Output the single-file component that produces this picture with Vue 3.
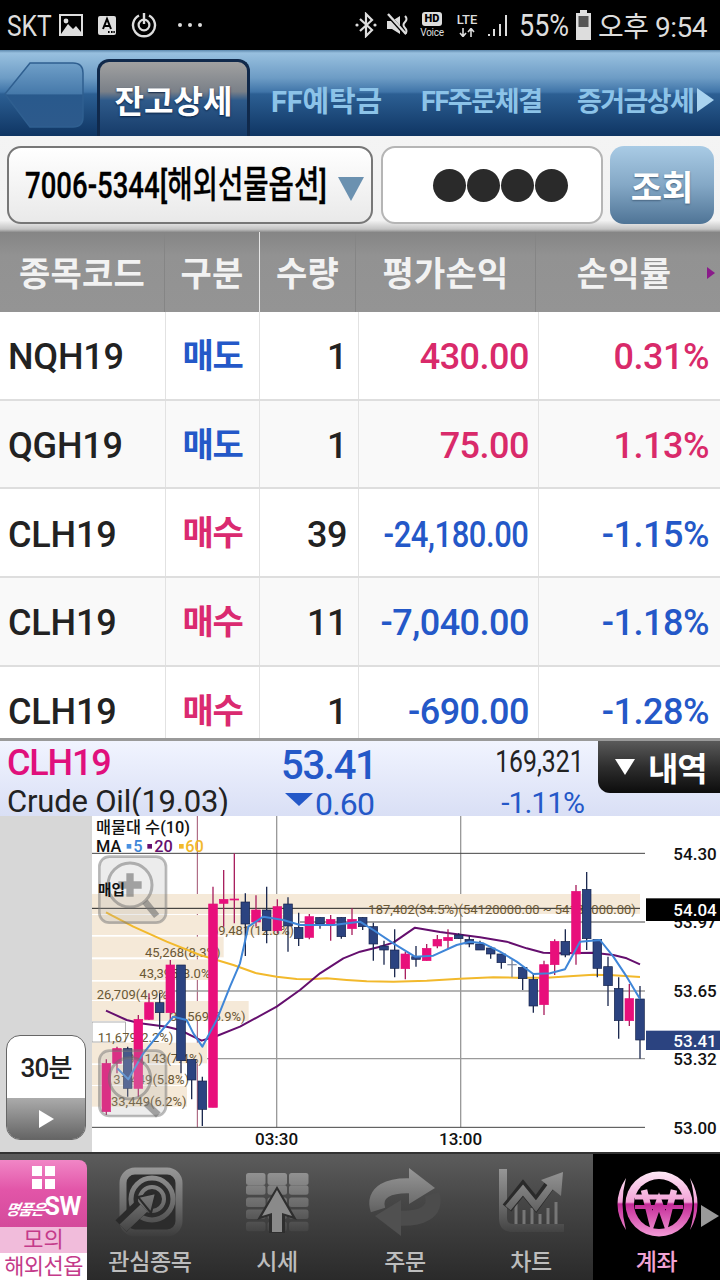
<script setup>
const tabs = [
  { t: 'FF예탁금', w: 150, c: 't1' },
  { t: 'FF주문체결', w: 156, c: 't2' },
  { t: '증거금상세', w: 120, c: 't3' }
]
const heads = [
  { t: '종목코드', c: 'h1' }, { t: '구분', c: 'h2' }, { t: '수량', c: 'h3' }, { t: '평가손익', c: 'h4' }, { t: '손익률', c: 'h5' }
]
const rows = [
  ['NQH19', '매도', '1', '430.00', '0.31%', 'sell', 'up', ''],
  ['QGH19', '매도', '1', '75.00', '1.13%', 'sell', 'up', ''],
  ['CLH19', '매수', '39', '-24,180.00', '-1.15%', 'buy', 'down', 'tight'],
  ['CLH19', '매수', '11', '-7,040.00', '-1.18%', 'buy', 'down', ''],
  ['CLH19', '매수', '1', '-690.00', '-1.28%', 'buy', 'down', '']
]
const P = '#e80f7b', N = '#2b4380'
const left = [
  [319,730,875,718,885,P],[351,686,730,680,760,P],[383,686,805,680,830,N],[415,598,805,585,830,P],
  [447,548,598,520,600,P],[479,548,578,520,628,N],[511,435,578,420,600,P],[543,435,722,435,760,N],
  [575,718,780,718,838,N],[607,783,868,770,918,N],[639,252,862,200,862,P],[671,238,250,150,320,P],
  [703,237,240,100,310,P],[736,246,312,220,408,N],[768,270,306,226,320,P],[800,270,332,200,370,N],
  [832,260,332,238,340,P],[864,252,318,232,395,N],[896,322,356,278,378,N],[928,290,352,282,358,P],
  [960,292,312,292,326,N],[992,298,315,285,362,P],[1024,292,350,292,356,N],[1056,298,326,265,345,P]
]
const right = [
  [8,292,320,292,330,N],[40,320,372,308,422,N],[72,378,390,362,434,N],[104,390,445,328,472,N],
  [136,402,446,395,478,P],[168,410,418,378,440,N],[200,385,422,372,422,P],[232,358,378,345,385,P],
  [264,352,362,328,388,P],[296,345,356,340,356,N],[328,358,372,348,382,N],[360,372,390,362,390,N],
  [392,384,402,378,416,N],[424,402,428,402,446,N],[488,442,476,442,510,N],[520,478,558,462,578,N],
  [552,434,554,422,585,P],[584,364,434,358,465,P],[616,364,405,328,412,N],[648,214,402,195,434,P],
  [680,208,356,156,390,N],[712,358,445,358,472,N],[744,440,497,410,558,N],[776,505,602,472,656,N],
  [808,536,602,492,618,P],[840,537,660,498,716,N]
].map(c => [c[0] + 1080, ...c.slice(1)])
const candles = [...left, ...right].map(c => ({ x: c[0], top: c[1], bot: c[2], wt: c[3], wb: c[4], col: c[5], wick: c[5] === P ? '#a8205f' : '#1d2a50' }))

const pts = (l, r) => [...l, ...r.map(p => [p[0] + 1080, p[1]])].map(p => p.join(',')).join(' ')
const ma60 = pts(
  [[318,277],[400,320],[500,365],[600,405],[700,435],[770,460],[830,470],[890,477],[930,478],[980,475],[1040,480]],
  [[20,484],[100,485],[200,482],[300,476],[400,472],[470,473],[560,473],[640,468],[700,464],[760,466],[840,471]]
)
const ma20 = pts(
  [[318,572],[380,600],[420,610],[500,620],[540,630],[580,650],[605,662],[650,648],[720,620],[830,560],[900,510],[960,460],[1030,415]],
  [[0,395],[60,380],[100,368],[165,323],[240,336],[360,352],[440,365],[500,385],[550,398],[600,400],[700,398],[760,405],[800,415],[840,433]]
)
const ma5 = pts(
  [[352,745],[385,778],[430,700],[470,650],[520,590],[560,600],[580,640],[607,680],[650,600],[690,500],[720,430],[745,320],[790,290],[850,300],[900,315],[1000,315]],
  [[0,305],[40,330],[100,370],[165,410],[220,407],[290,375],[330,365],[370,370],[420,395],[470,425],[520,462],[570,460],[615,448],[660,365],[720,360],[760,410],[800,470],[840,537]]
)
const bars = [
  [222,60,1920-276],[285,60,600],[350,62,395],[418,62,352],[485,55,225],[543,60,470],[668,62,345],[735,60,270],[798,62,285]
]
const vols = [
  ['187,402(34.5%)(54120000.00 ~ 54130000.00)', 1105, 282],
  ['69,481(12.8%)', 633, 345],
  ['45,268(8.3%)', 435, 410],
  ['43,395(8.0%)', 418, 475],
  ['26,709(4.9%)', 290, 537],
  ['34,569(6.9%)', 510, 602],
  ['11,679(2.2%)', 293, 665],
  ['39,143(7.4%)', 382, 730],
  ['31,449(5.8%)', 340, 792],
  ['33,449(6.2%)', 333, 857]
]
const axis = [
  ['54.30', 120], ['53.97', 325], ['53.65', 530], ['53.32', 735], ['53.00', 942]
]
const gridDark = [[276, 100], [900, 306]]
const navBlocks = []
for (let r = 0; r < 5; r++) for (let c = 0; c < 3; c++) navBlocks.push({ x: 9 + c * 21.5, y: 7 + r * 12.2, w: 19.5, h: r === 0 ? 12 : 9.5 })
</script>

<template>
  <div class="page">
    <!-- status bar -->
    <div class="status">
      <span class="skt">SKT</span>
      <svg class="s-pic" width="24" height="22" viewBox="0 0 24 22"><rect x="1" y="1" width="22" height="20" fill="none" stroke="#ddd" stroke-width="2"/><path d="M2 20 L9 10 L14 15 L17 12 L22 18 V20 Z" fill="#ddd"/><circle cx="7" cy="7" r="2.4" fill="#ddd"/></svg>
      <svg class="s-a" width="18" height="19" viewBox="0 0 18 19"><rect width="18" height="19" rx="2" fill="#ddd"/><path d="M5 13 L9 3 L13 13 M6.5 10 H11.5" fill="none" stroke="#000" stroke-width="2"/><path d="M10 16 h1.6 M13 16 h1.6 M15.4 16 h1.4" stroke="#000" stroke-width="2"/></svg>
      <svg class="s-pow" width="26" height="26" viewBox="0 0 26 26"><path d="M8 3.5 A11 11 0 1 0 18 3.5" fill="none" stroke="#ddd" stroke-width="2.4"/><circle cx="13" cy="13" r="5.4" fill="none" stroke="#ddd" stroke-width="2.2"/><path d="M13 1 V12" stroke="#ddd" stroke-width="2.4"/></svg>
      <span class="dots"><i></i><i></i><i></i></span>
      <svg class="s-bt" width="22" height="26" viewBox="0 0 22 26"><path d="M5 7 L17 18 L11 24 V2 L17 8 L5 19" fill="none" stroke="#ddd" stroke-width="2.2"/><circle cx="2" cy="13" r="1.6" fill="#ddd"/><circle cx="20" cy="13" r="1.6" fill="#ddd"/></svg>
      <svg class="s-mute" width="25" height="24" viewBox="0 0 25 24"><path d="M1 8 H6 L14 3 V21 L6 16 H1 Z" fill="#ddd"/><path d="M2 2 L20 22" stroke="#000" stroke-width="3.6"/><path d="M2 1 L20 21" stroke="#ddd" stroke-width="2.4"/><path d="M19 3 q3 3 0 6 q-3 3 0 6 q3 3 0 6" fill="none" stroke="#ddd" stroke-width="2"/></svg>
      <span class="hd"><b>HD</b><em>Voice</em></span>
      <span class="lte"><b>LTE</b><svg width="22" height="9" viewBox="0 0 22 9"><path d="M7 0 V8 M4 5 L7 8.5 L10 5 M15 9 V1 M12 4 L15 .5 L18 4" fill="none" stroke="#ddd" stroke-width="1.6"/></svg></span>
      <svg class="s-sig" width="24" height="24" viewBox="0 0 24 24"><path d="M1 23 h2 v-2 h-2z M6 23 h2 v-7 h-2z M12 23 h2 V11 h-2z M18 23 h2 V2 h-2z" fill="#ddd"/></svg>
      <span class="pct">55%</span>
      <svg class="s-bat" width="17" height="30" viewBox="0 0 17 30"><path d="M5 0 H12 V3 H16 V30 H1 V3 H5 Z" fill="#ddd"/><rect x="3.5" y="6" width="10" height="11" fill="#555"/></svg>
      <span class="clock">오후 9:54</span>
    </div>

    <!-- tab bar -->
    <div class="tabbar">
      <svg class="back" width="84" height="68" viewBox="0 0 84 68"><path d="M2 33 L27 2 H70 Q80 2 80 12 V56 Q80 66 70 66 H27 Z" fill="url(#backG)" stroke="#2f5f90" stroke-width="1.5"/><defs><linearGradient id="backG" x1="0" y1="0" x2="0" y2="1"><stop offset="0" stop-color="#6f9fc8"/><stop offset=".48" stop-color="#4679aa"/><stop offset=".5" stop-color="#29598c"/><stop offset="1" stop-color="#2d5a8c"/></linearGradient></defs></svg>
      <div class="tab-active"><span>잔고상세</span></div>
      <div v-for="t in tabs" :key="t.t" class="tab" :class="t.c" :style="{ width: t.w + 'px' }"><span>{{ t.t }}</span></div>
      <i class="tab-arrow"></i>
    </div>

    <!-- search -->
    <div class="search">
      <div class="select"><span class="acct">7006-5344[해외선물옵션]</span><i class="sel-tri"></i></div>
      <div class="pw"><i></i><i></i><i></i><i></i></div>
      <div class="go">조회</div>
    </div>

    <!-- head -->
    <div class="thead">
      <div v-for="h in heads" :key="h.t" class="th" :class="h.c">{{ h.t }}</div>
      <i class="more"></i>
    </div>

    <!-- rows -->
    <div class="tbody">
      <div v-for="(r, i) in rows" :key="i" class="tr" :class="{ alt: i % 2 === 1 }">
        <div class="td code">{{ r[0] }}</div>
        <div class="td kind" :class="r[5]">{{ r[1] }}</div>
        <div class="td num qty">{{ r[2] }}</div>
        <div class="td num" :class="r[6]"><span :class="r[7]">{{ r[3] }}</span></div>
        <div class="td num rate" :class="r[6]">{{ r[4] }}</div>
      </div>
    </div>

    <!-- quote -->
    <div class="quote">
      <div class="q-a"><div class="q-code">CLH19</div><div class="q-name">Crude Oil(19.03)</div></div>
      <div class="q-b"><div class="q-price">53.41</div><div class="q-chg"><i></i><span>0.60</span></div></div>
      <div class="q-c"><div class="q-vol">169,321</div><div class="q-rate">-1.11%</div></div>
      <div class="q-btn"><i></i><span>내역</span></div>
    </div>

    <!-- chart -->
    <div class="chartwrap">
      <div class="rail">
        <div class="period"><div class="p-top">30분</div><div class="p-bot"><i></i></div></div>
      </div>
      <svg class="chart" width="628" height="336" viewBox="276 -12 1884 1008">
        <line x1="592" y1="-12" x2="592" y2="922" stroke="#a0506e" stroke-width="3"/>
        <line v-for="x in [830, 1382]" :key="x" :x1="x" y1="-12" :x2="x" y2="922" stroke="#9a9a9a" stroke-width="4"/>
        <line x1="276" y1="513" x2="1935" y2="513" stroke="#9a9a9a" stroke-width="4"/>
        <line x1="276" y1="716" x2="1935" y2="716" stroke="#9a9a9a" stroke-width="4"/>
        <line x1="276" y1="922" x2="1935" y2="922" stroke="#444" stroke-width="3"/>
        <line v-for="g in gridDark" :key="g[1]" :x1="g[0]" :y1="g[1]" x2="1935" :y2="g[1]" stroke="#444" stroke-width="3"/>
        <rect v-for="b in bars" :key="b[0]" x="276" :y="b[0]" :width="b[2]" :height="b[1]" fill="#f5e9d8"/>
        <rect x="276" y="606" width="100" height="60" fill="#fff" stroke="#888" stroke-width="2"/>
        <line x1="276" y1="265" x2="1920" y2="265" stroke="#222" stroke-width="3"/>
        <text v-for="v in vols" :key="v[0]" class="vol" :x="v[1]" :y="v[2]">{{ v[0] }}</text>

        <polyline :points="ma60" class="ma" stroke="#f2b92c" />
        <polyline :points="ma20" class="ma" stroke="#650f6e" />
        <g v-for="(c, i) in candles" :key="i">
          <line :x1="c.x" :y1="c.wt" :x2="c.x" :y2="c.wb" :stroke="c.wick" stroke-width="4"/>
          <rect :x="c.x - 13" :y="c.top" width="26" :height="c.bot - c.top" :fill="c.col" :stroke="c.col === '#2b4380' ? '#16234a' : c.col" stroke-width="2"/>
        </g>
        <line x1="1522" y1="434" x2="1550" y2="434" stroke="#8a93a8" stroke-width="4"/>
        <line x1="1536" y1="420" x2="1536" y2="472" stroke="#7a8398" stroke-width="4"/>
        <polyline :points="ma5" class="ma" stroke="#3f86d8" />

        <!-- zoom buttons -->
        <g class="zoomb">
          <rect x="298" y="110" width="200" height="198" rx="30"/>
          <circle cx="390" cy="195" r="66" class="lens"/>
          <path d="M390 160 V230 M355 195 H425" class="plus"/>
          <path d="M435 245 L470 288" class="hand"/>
          <rect x="298" y="692" width="200" height="196" rx="30"/>
          <circle cx="390" cy="775" r="62" class="lens"/>
          <path d="M438 850 L475 885" class="hand"/>
        </g>

        <text class="legend" x="288" y="38">매물대 수(10)</text>
        <text class="legend" x="288" y="95">MA</text>
        <rect x="380" y="72" width="14" height="14" fill="#4a90e0"/>
        <text class="legend c5" x="400" y="95">5</text>
        <rect x="442" y="72" width="14" height="14" fill="#650f6e"/>
        <text class="legend c20" x="463" y="95">20</text>
        <rect x="537" y="72" width="14" height="14" fill="#f2b92c"/>
        <text class="legend c60" x="556" y="95">60</text>
        <text class="buy-lbl" x="294" y="226">매입</text>

        <text v-for="a in axis" :key="a[0]" class="ax" x="2020" :y="a[1]">{{ a[0] }}</text>
        <rect x="1938" y="235" width="222" height="68" fill="#000"/>
        <text class="ax axw" x="2020" y="288">54.04</text>
        <rect x="1938" y="632" width="222" height="58" fill="#2b4380"/>
        <text class="ax axw" x="2020" y="682">53.41</text>
        <text class="ax" x="765" y="975">03:30</text>
        <text class="ax" x="1317" y="975">13:00</text>
      </svg>
    </div>

    <!-- nav -->
    <div class="nav">
      <div class="brand">
        <div class="b-top">
          <div class="grid4"><i></i><i></i><i></i><i></i></div>
          <div class="b-name"><em>명품은</em><b>SW</b></div>
        </div>
        <div class="b-mid">모의</div>
        <div class="b-low">해외선옵</div>
      </div>
      <div class="nitem">
        <svg width="80" height="72" viewBox="0 0 80 72">
          <defs>
            <linearGradient id="nd" gradientUnits="userSpaceOnUse" x1="0" y1="0" x2="0" y2="72"><stop offset="0" stop-color="#9a9a9a"/><stop offset=".55" stop-color="#6a6a6a"/><stop offset="1" stop-color="#3a3a3a"/></linearGradient>
            <linearGradient id="pk" gradientUnits="userSpaceOnUse" x1="0" y1="6" x2="0" y2="70"><stop offset="0" stop-color="#fde8f5"/><stop offset=".47" stop-color="#f3a2d8"/><stop offset=".5" stop-color="#c42a98"/><stop offset="1" stop-color="#f399d6"/></linearGradient>
          </defs>
          <rect x="13" y="5" width="56" height="62" rx="12" fill="#2c2c2c" stroke="url(#nd)" stroke-width="7"/>
          <circle cx="42" cy="33" r="21" fill="none" stroke="url(#nd)" stroke-width="5"/>
          <circle cx="42" cy="33" r="12" fill="none" stroke="url(#nd)" stroke-width="4"/>
          <path d="M11 60 L32 40" stroke="#2a2a2a" stroke-width="16"/>
          <path d="M13 62 L34 42" stroke="url(#nd)" stroke-width="10"/>
          <path d="M28 31 L46 27 L41 47 Z" fill="url(#nd)" stroke="#2a2a2a" stroke-width="2"/>
        </svg>
        <span>관심종목</span>
      </div>
      <div class="nitem">
        <svg width="80" height="72" viewBox="0 0 80 72">
          <rect v-for="(b, i) in navBlocks" :key="i" :x="b.x" :y="b.y" :width="b.w" :height="b.h" rx="2.5" fill="url(#nd)"/>
          <path d="M40 20 L60 54 L48 50 V67 H32 V50 L20 54 Z" fill="#2e2e2e"/>
          <path d="M40 24 L55 50 L45 47 V66 H35 V47 L25 50 Z" fill="#8a8a8a"/>
        </svg>
        <span>시세</span>
      </div>
      <div class="nitem">
        <svg width="80" height="72" viewBox="0 0 80 72">
          <g>
            <path d="M13 44 C7 26 24 18 50 20" fill="none" stroke="url(#nd)" stroke-width="15"/>
            <path d="M44 2 L70 22 L44 38 Z" fill="url(#nd)"/>
          </g>
          <g transform="rotate(180 40 36)">
            <path d="M13 44 C7 26 24 18 50 20" fill="none" stroke="#4c4c4c" stroke-width="15"/>
            <path d="M44 2 L70 22 L44 38 Z" fill="#505050"/>
          </g>
        </svg>
        <span>주문</span>
      </div>
      <div class="nitem">
        <svg width="80" height="72" viewBox="0 0 80 72">
          <path d="M12 3 V52 Q12 62 22 62 H73" fill="none" stroke="url(#nd)" stroke-width="8"/>
          <path d="M25 38 V58 M33 44 V58 M41 42 V58 M49 48 V58 M57 42 V58 M65 36 V58" stroke="#777" stroke-width="3"/>
          <path d="M16 42 L32 22 L45 38 L58 20" fill="none" stroke="#2a2a2a" stroke-width="11"/>
          <path d="M17 42 L32 24 L45 40 L60 20" fill="none" stroke="url(#nd)" stroke-width="7"/>
          <path d="M50 14 L72 6 L70 30 Z" fill="url(#nd)"/>
        </svg>
        <span>차트</span>
      </div>
      <div class="nitem active">
        <svg class="won" width="80" height="72" viewBox="0 0 80 72">
          <path d="M9 12 Q-8 38 9 64 Q2 38 9 12 Z" fill="url(#pk)"/>
          <path d="M73 12 Q88 38 73 64 Q81 38 73 12 Z" fill="url(#pk)"/>
          <ellipse cx="42" cy="38" rx="33.5" ry="32.5" fill="url(#pk)"/>
          <circle cx="42" cy="38" r="25" fill="#000"/>
          <path d="M27 24 L35 56 L42 36 L49 56 L57 24" fill="none" stroke="url(#pk)" stroke-width="6.5"/>
          <path d="M18 31 H66" stroke="url(#pk)" stroke-width="5"/>
          <path d="M18 41 H66" stroke="url(#pk)" stroke-width="4"/>
        </svg>
        <span>계좌</span>
        <i class="n-arrow"></i>
      </div>
    </div>
  </div>
</template>

<style>
html, body { margin: 0; padding: 0; background: #fff; }
</style>

<style scoped>
.page { width: 720px; height: 1280px; overflow: hidden; display: flex; flex-direction: column; font-family: Roboto, "Noto Sans CJK KR", sans-serif; background: #fff; }
i { display: block; font-style: normal; }

/* status */
.status { height: 50px; flex: none; background: #000; color: #ddd; display: flex; align-items: center; position: relative; }
.skt { font-size: 30px; margin-left: 7px; width: 42px; transform: scaleX(.82); transform-origin: left center; white-space: nowrap; }
.s-pic { margin-left: 10px; }
.s-a { margin-left: 15px; }
.s-pow { margin-left: 15px; }
.dots { display: flex; gap: 6px; margin-left: 21px; margin-right: 153px; }
.dots i { width: 4px; height: 4px; border-radius: 50%; background: #ddd; }
.s-mute { margin-left: 9px; }
.hd { margin-left: 7px; width: 28px; display: flex; flex-direction: column; align-items: center; line-height: 1; }
.hd b { font-size: 11px; background: #ddd; color: #000; border-radius: 3px; padding: 1px 3px; font-weight: 900; line-height: 12px; }
.hd em { font-style: normal; font-size: 10px; margin-top: 2px; letter-spacing: -.3px; }
.lte { margin-left: 8px; width: 26px; display: flex; flex-direction: column; align-items: center; line-height: 1; }
.lte b { font-size: 13px; line-height: 14px; font-weight: 500; margin-bottom: 1px; }
.s-sig { margin-left: 7px; }
.pct { margin-left: 8px; font-size: 31px; width: 48px; white-space: nowrap; transform: scaleX(.87); transform-origin: left center; }
.s-bat { margin-left: 8px; }
.clock { margin-left: 6px; font-size: 28px; white-space: nowrap; letter-spacing: -.5px; }

/* tabs */
.tabbar { height: 86px; flex: none; display: flex; align-items: flex-end; position: relative; background: linear-gradient(#5d88ad 0, #98c0df 3px, #6d9cc5 28px, #3f74a8 42px, #2c5f93 44px, #0f3563 100%); }
.back { position: absolute; left: 3px; top: 11px; }
.tab-active { margin-left: 97px; width: 153px; height: 77px; box-sizing: border-box; border: 3px solid #10294b; border-bottom: 0; border-radius: 12px 12px 0 0; background: linear-gradient(#a1a1a1 0, #7a8088 40%, #2e5a8a 52%, #163b69 100%); display: flex; justify-content: center; align-items: center; padding-top: 6px; }
.tab-active span { color: #fff; font-size: 32px; font-weight: 700; white-space: nowrap; line-height: 1; text-shadow: 0 1px 2px #0a2345; }
.tab { height: 84px; display: flex; align-items: center; flex: none; padding-top: 16px; box-sizing: border-box; }
.tab span { color: #8cc3e8; font-weight: 700; white-space: nowrap; line-height: 1; }
.t1 span { font-size: 29px; letter-spacing: -.2px; margin-left: 21px; }
.t2 span { font-size: 27px; letter-spacing: -1.4px; margin-left: 21px; }
.t3 span { font-size: 27px; letter-spacing: -1.6px; margin-left: 21px; }
.tab-arrow { position: absolute; left: 697px; top: 38px; width: 0; height: 0; border-left: 17px solid #a9d3ef; border-top: 12px solid transparent; border-bottom: 12px solid transparent; }

/* search */
.search { height: 96px; flex: none; box-sizing: border-box; display: flex; align-items: flex-start; padding: 10px 6px 0 7px; background: linear-gradient(#f4f4f4 0, #f2f2f2 88%, #c4c4c4 97%, #8e8e8e 100%); }
.select { width: 366px; height: 78px; box-sizing: border-box; border: 2px solid #777; border-radius: 14px; background: linear-gradient(#fff, #e9e9e9); display: flex; align-items: center; padding-left: 16px; position: relative; }
.acct { font-size: 37px; font-weight: 500; color: #000; white-space: nowrap; transform: scaleX(.745); transform-origin: left center; line-height: 1; -webkit-text-stroke: .3px #000; }
.sel-tri { position: absolute; left: 329px; top: 29px; width: 0; height: 0; border-top: 24px solid #6b91b0; border-left: 13px solid transparent; border-right: 13px solid transparent; }
.pw { width: 222px; height: 78px; margin-left: 8px; box-sizing: border-box; border: 2px solid #b5b5b5; border-radius: 14px; background: #fff; display: flex; align-items: center; justify-content: center; gap: 1px; padding-left: 16px; }
.pw i { width: 33px; height: 33px; border-radius: 50%; background: #2a2a2a; }
.go { width: 104px; height: 78px; margin-left: 7px; border-radius: 14px; background: linear-gradient(#a9cbe5, #84a8c6 50%, #4f7496); color: #fff; font-size: 34px; font-weight: 700; display: flex; align-items: center; justify-content: center; text-shadow: 0 1px 2px #44617c; white-space: nowrap; }

/* table */
.thead { height: 80px; flex: none; display: grid; grid-template-columns: 164px 95px 96px 180px 185px; background: linear-gradient(#858585 0, #929292 30%, #949494 100%); position: relative; }
.th { color: #f2f2f2; font-size: 34px; font-weight: 700; display: flex; align-items: center; justify-content: center; border-left: 1px solid #858585; padding-bottom: 2px; white-space: nowrap; letter-spacing: .2px; }
.th.h1 { border-left: 0; }
.th.h3 { border-left: 1px solid #e6e6e6; }
.th.h5 { padding-right: 8px; }
.more { position: absolute; left: 707px; top: 35px; width: 0; height: 0; border-left: 8px solid #8a1a8a; border-top: 6px solid transparent; border-bottom: 6px solid transparent; }
.tbody { height: 426px; flex: none; overflow: hidden; }
.tr { display: grid; grid-template-columns: 165px 94px 99px 180px 182px; height: 88.7px; box-sizing: border-box; border-bottom: 2px solid #dedede; background: #fff; }
.tr.alt { background: #f9f9f9; }
.td { display: flex; align-items: center; border-left: 1px solid #e2e2e2; font-size: 36px; font-weight: 500; color: #222; white-space: nowrap; line-height: 1; padding-top: 4px; box-sizing: border-box; }
.code { border-left: 0; padding-left: 8px; letter-spacing: -.2px; }
.kind { justify-content: center; font-size: 34px; font-weight: 700; padding-top: 1px; letter-spacing: -1.4px; }
.sell { color: #2458c8; }
.buy { color: #da2a70; }
.num { justify-content: flex-end; padding-right: 9px; letter-spacing: -.5px; }
.tight { display: inline-block; transform: scaleX(.86); transform-origin: right center; }
.qty { padding-right: 11px; }
.rate { padding-right: 11px; }
.up { color: #d92a6a; }
.down { color: #2458c8; }

/* quote */
.quote { height: 78px; flex: none; box-sizing: border-box; border-top: 3px solid #9a9a9a; background: linear-gradient(#f1f4ff, #d9dff5); display: flex; overflow: hidden; position: relative; }
.q-a { width: 274px; padding-left: 7px; box-sizing: border-box; flex: none; }
.q-code { color: #e0107c; font-size: 36px; font-weight: 500; line-height: 44px; letter-spacing: -1.2px; }
.q-name { color: #222; font-size: 31px; line-height: 36px; letter-spacing: -.2px; white-space: nowrap; margin-top: -1px; }
.q-b { width: 220px; flex: none; }
.q-price { color: #2458c8; font-size: 40px; font-weight: 500; line-height: 50px; letter-spacing: -1.3px; padding-left: 7px; }
.q-chg { display: flex; align-items: flex-start; margin-top: -6px; margin-left: 11px; }
.q-chg i { width: 0; height: 0; border-top: 13px solid #2458c8; border-left: 14px solid transparent; border-right: 14px solid transparent; margin-top: 8px; }
.q-chg span { color: #2458c8; font-size: 32px; line-height: 38px; margin-left: 2px; letter-spacing: -.8px; }
.q-c { flex: none; width: 90px; display: flex; flex-direction: column; align-items: flex-end; }
.q-vol { font-size: 31px; line-height: 42px; color: #222; white-space: nowrap; transform: scaleX(.8); transform-origin: right center; }
.q-rate { font-size: 30px; line-height: 36px; color: #2458c8; letter-spacing: -1px; margin-top: 2px; white-space: nowrap; }
.q-btn { position: absolute; right: 0; top: 0; width: 122px; height: 52px; border-radius: 0 0 0 12px; background: linear-gradient(#5a5a5a, #2e2e2e 50%, #0c0c0c); display: flex; align-items: center; color: #fff; font-size: 33px; font-weight: 700; }
.q-btn i { width: 0; height: 0; border-top: 16px solid #fff; border-left: 10px solid transparent; border-right: 10px solid transparent; margin-left: 17px; margin-right: 13px; }
.q-btn span { white-space: nowrap; letter-spacing: -1px; }

/* chart */
.chartwrap { height: 336px; flex: none; display: flex; }
.rail { width: 92px; flex: none; background: #d7d7d7; display: flex; align-items: flex-end; box-sizing: border-box; padding: 0 6px 12px; }
.period { width: 80px; height: 105px; box-sizing: border-box; border: 1px solid #666; border-radius: 14px; overflow: hidden; display: flex; flex-direction: column; background: #fff; }
.p-top { height: 62px; display: flex; align-items: center; justify-content: center; font-size: 26px; font-weight: 500; color: #222; padding-bottom: 4px; box-sizing: border-box; letter-spacing: -.8px; white-space: nowrap; }
.p-bot { flex: 1; background: linear-gradient(#ababab, #656565); display: flex; align-items: center; justify-content: center; }
.p-bot i { width: 0; height: 0; border-left: 15px solid #fff; border-top: 9px solid transparent; border-bottom: 9px solid transparent; }
.chart { display: block; background: #fff; flex: none; }
.vol { font-size: 39px; fill: #6a5835; }
.ma { fill: none; stroke-width: 6; stroke-linejoin: round; }
.zoomb rect { fill: rgba(170,170,170,.22); stroke: rgba(120,120,120,.5); stroke-width: 8; }
.lens { fill: rgba(255,255,255,.1); stroke: rgba(110,110,110,.5); stroke-width: 9; }
.plus { stroke: rgba(110,110,110,.6); stroke-width: 22; fill: none; }
.hand { stroke: rgba(110,110,110,.6); stroke-width: 20; fill: none; }
.legend { font-size: 49px; font-weight: 500; fill: #111; }
.c5 { fill: #3f86d8; }
.c20 { fill: #650f6e; }
.c60 { fill: #f2b92c; }
.buy-lbl { font-size: 44px; font-weight: 700; fill: #111; }
.ax { font-size: 51px; font-weight: 500; fill: #111; }
.axw { fill: #fff; }

/* nav */
.nav { height: 128px; flex: none; display: grid; grid-template-columns: 87px 126px 128px 128px 124px 127px; background: linear-gradient(#5c5c5c 0, #454545 40%, #2a2a2a 100%); border-top: 2px solid #333; box-sizing: border-box; }
.brand { margin-top: 6px; border-radius: 0 8px 0 0; overflow: hidden; display: flex; flex-direction: column; }
.b-top { height: 67px; background: linear-gradient(#f186c6, #e255a8 45%, #d44a9b); display: flex; flex-direction: column; align-items: center; padding-top: 6px; box-sizing: border-box; }
.grid4 { display: grid; grid-template-columns: 10px 10px; gap: 3px; }
.grid4 i { height: 10px; background: #fff; }
.b-name { display: flex; align-items: baseline; color: #fff; margin-top: 6px; white-space: nowrap; line-height: 24px; }
.b-name em { font-size: 15px; font-weight: 700; letter-spacing: -1px; transform: skewX(-12deg); }
.b-name b { font-size: 25px; letter-spacing: -.5px; font-weight: 700; }
.b-mid { height: 26px; background: #f1bcdb; color: #c43b8a; font-size: 22px; text-align: center; line-height: 26px; }
.b-low { flex: 1; background: #fff; color: #c43b8a; font-size: 22px; text-align: center; line-height: 27px; white-space: nowrap; letter-spacing: -.6px; }
.nitem { display: flex; flex-direction: column; align-items: center; padding-top: 12px; box-sizing: border-box; position: relative; color: #bdbdbd; }
.nitem svg { display: block; }
.won { overflow: visible; }
.nitem span { font-size: 23px; font-weight: 500; line-height: 28px; margin-top: 11px; white-space: nowrap; letter-spacing: -.3px; }
.nitem.active { background: #000; color: #f1a3d4; }
.n-arrow { position: absolute; right: 1px; top: 51px; width: 0; height: 0; border-left: 18px solid #9a9a9a; border-top: 11px solid transparent; border-bottom: 11px solid transparent; }
</style>
